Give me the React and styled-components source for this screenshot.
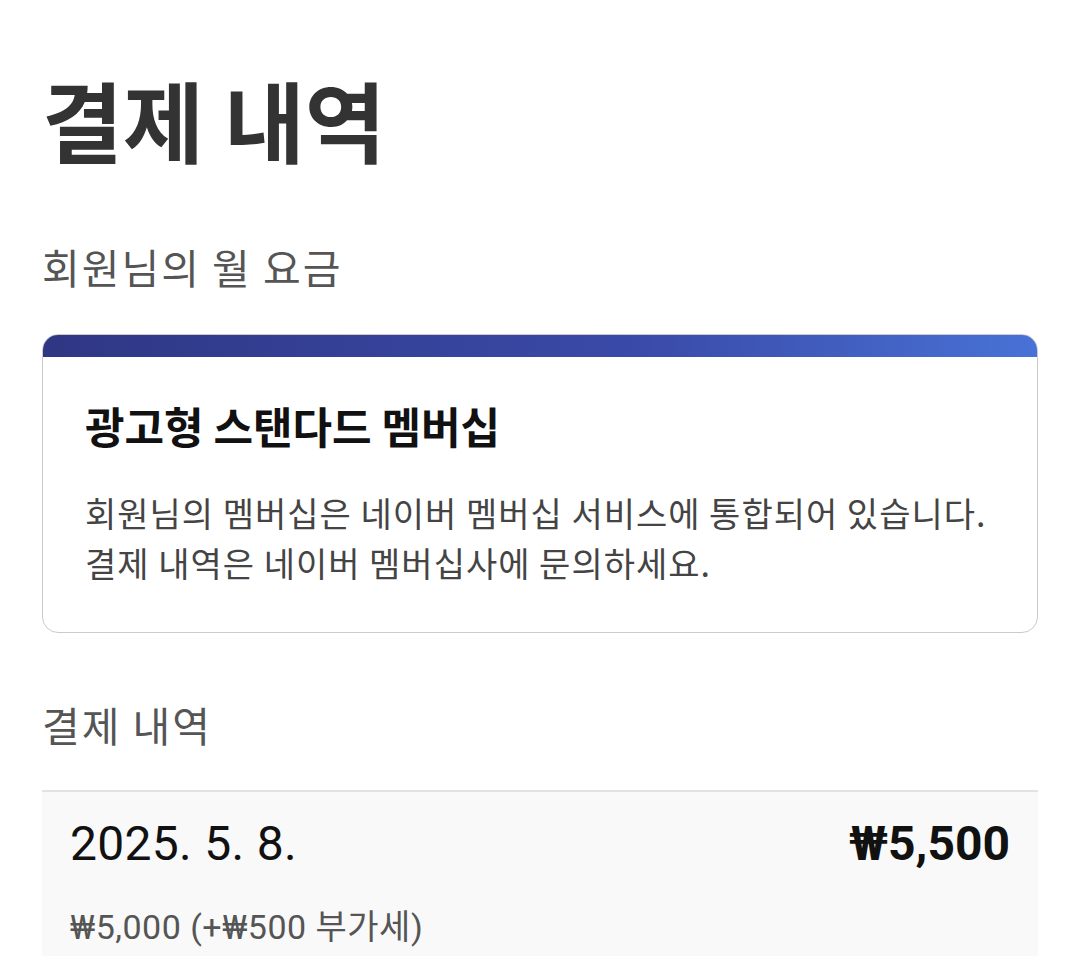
import React from 'react';
import styled, { createGlobalStyle } from 'styled-components';

const GlobalStyle = createGlobalStyle`
  body {
    margin: 0;
    background: #ffffff;
    font-family: "Noto Sans CJK KR", "Noto Sans", sans-serif;
  }
`;

const Page = styled.main`
  padding: 61px 42px 0;
`;

const PageTitle = styled.h1`
  margin: 0;
  font-size: 88px;
  font-weight: 700;
  line-height: 1.3;
  color: #333333;
`;

const SectionLabel = styled.h2`
  margin: 65px 0 0;
  font-size: 41px;
  font-weight: 400;
  letter-spacing: 2px;
  line-height: 1.3;
  color: #555555;
`;

const PlanCard = styled.section`
  margin-top: 40px;
  border: 1.5px solid #cbcbcb;
  border-radius: 16px;
  overflow: hidden;
`;

const CardStripe = styled.div`
  height: 22px;
  background: linear-gradient(90deg, #2f3784 0%, #3a4aa8 60%, #4872d6 100%);
`;

const CardBody = styled.div`
  padding: 41px 36px 44px 42px;
`;

const PlanName = styled.h3`
  margin: 0;
  font-size: 43px;
  font-weight: 700;
  line-height: 1.3;
  color: #111111;
`;

const PlanNote = styled.p`
  margin: 34px 0 0;
  font-size: 34px;
  line-height: 50px;
  letter-spacing: 1px;
  white-space: nowrap;
  color: #444444;
`;

const PaymentItem = styled.div`
  margin-top: 39px;
  border-top: 2px solid #e2e2e2;
  background: #f9f9f9;
  padding: 21px 28px 20px;
  font-family: Roboto, "Noto Sans CJK KR", sans-serif;
`;

const PaymentRow = styled.div`
  display: flex;
  justify-content: space-between;
  align-items: baseline;
  line-height: 1.3;
`;

const PayDate = styled.span`
  font-size: 48px;
  letter-spacing: 0.3px;
  color: #111111;
`;

const PayTotal = styled.span`
  font-size: 48px;
  font-weight: 700;
  color: #111111;
`;

const PayBreakdown = styled.div`
  margin-top: 30px;
  font-size: 34px;
  letter-spacing: 0.5px;
  line-height: 1.3;
  color: #555555;
`;

export default function App() {
  return (
    <>
      <GlobalStyle />
      <Page>
        <PageTitle>결제 내역</PageTitle>
        <SectionLabel>회원님의 월 요금</SectionLabel>
        <PlanCard>
          <CardStripe />
          <CardBody>
            <PlanName>광고형 스탠다드 멤버십</PlanName>
            <PlanNote>
              회원님의 멤버십은 네이버 멤버십 서비스에 통합되어 있습니다.
              <br />
              결제 내역은 네이버 멤버십사에 문의하세요.
            </PlanNote>
          </CardBody>
        </PlanCard>
        <SectionLabel>결제 내역</SectionLabel>
        <PaymentItem>
          <PaymentRow>
            <PayDate>2025. 5. 8.</PayDate>
            <PayTotal>₩5,500</PayTotal>
          </PaymentRow>
          <PayBreakdown>₩5,000 (+₩500 부가세)</PayBreakdown>
        </PaymentItem>
      </Page>
    </>
  );
}
